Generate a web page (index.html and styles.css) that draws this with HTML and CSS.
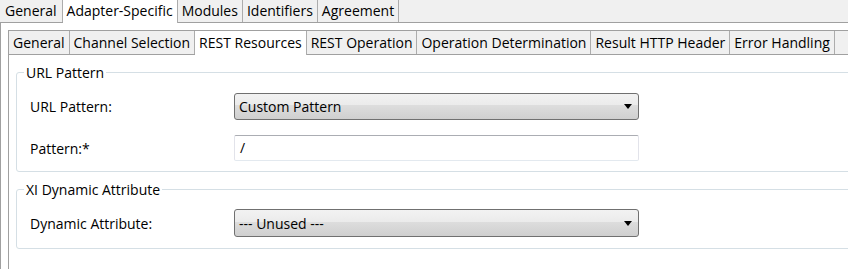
FILE: index.html
```
<!DOCTYPE html>
<html>
<head>
<meta charset="utf-8">
<link rel="stylesheet" href="styles.css">
</head>
<body>
<div class="page">
  <div class="tabbar top">
    <div class="tab first">General</div>
    <div class="tab sel">Adapter-Specific</div>
    <div class="tab">Modules</div>
    <div class="tab">Identifiers</div>
    <div class="tab">Agreement</div>
  </div>
  <div class="outer">
    <div class="inner">
      <div class="tabbar sub">
        <div class="tab">General</div>
        <div class="tab">Channel Selection</div>
        <div class="tab sel">REST Resources</div>
        <div class="tab">REST Operation</div>
        <div class="tab">Operation Determination</div>
        <div class="tab">Result HTTP Header</div>
        <div class="tab">Error Handling</div>
      </div>
      <div class="content">
        <fieldset class="group g1">
          <legend>URL Pattern</legend>
          <div class="rows">
            <div class="row">
              <div class="label">URL Pattern:</div>
              <div class="combo"><span class="val">Custom Pattern</span><svg class="arrow" width="8" height="5" viewBox="0 0 8 5"><polygon points="0,0 8,0 4,5" fill="#000"/></svg></div>
            </div>
            <div class="row">
              <div class="label">Pattern:*</div>
              <div class="field">/</div>
            </div>
          </div>
        </fieldset>
        <fieldset class="group g2">
          <legend>XI Dynamic Attribute</legend>
          <div class="rows">
            <div class="row">
              <div class="label">Dynamic Attribute:</div>
              <div class="combo tall"><span class="val">--- Unused ---</span><svg class="arrow" width="8" height="5" viewBox="0 0 8 5"><polygon points="0,0 8,0 4,5" fill="#000"/></svg></div>
            </div>
          </div>
        </fieldset>
      </div>
    </div>
  </div>
</div>
</body>
</html>
```
FILE: styles.css
```
html, body {
  margin: 0;
  padding: 0;
  background: #ffffff;
}
body {
  font-family: "Open Sans", "Noto Sans", sans-serif;
  font-size: 14px;
  color: #000;
}
.page {
  width: 848px;
  height: 269px;
  overflow: hidden;
}
.tabbar {
  display: flex;
  background: #f0f0f0;
}
.tabbar.top {
  height: 22px;
  border-bottom: 1px solid #a0a0a0;
}
.tab {
  height: 100%;
  padding: 0 4px;
  border-right: 1px solid #acacac;
  line-height: 22px;
  white-space: nowrap;
  box-sizing: border-box;
}
.tab.first {
  padding-left: 5px;
  padding-right: 5px;
}
.tab.sel {
  background: #ffffff;
  height: calc(100% + 1px);
}
.outer {
  border-left: 1px solid #a0a0a0;
  padding: 7px 0 0 7px;
  height: 246px;
}
.inner {
  border-left: 1px solid #a0a0a0;
  border-top: 1px solid #a0a0a0;
  height: 100%;
  margin-right: -20px;
}
.tabbar.sub {
  height: 23px;
  border-bottom: 1px solid #a0a0a0;
}
.tabbar.sub .tab {
  line-height: 23px;
}
.content {
  padding: 0 0 0 7px;
}
.group {
  margin: 8px 0 0 0;
  padding: 0;
  border: 1px solid #d5dfe5;
  border-radius: 3px;
  min-width: 0;
}
.group legend {
  margin-left: 7px;
  padding: 0 2px;
  line-height: 19px;
  height: 19px;
}
.rows {
  display: flex;
  flex-direction: column;
  gap: 15px;
  padding: 11px 0 10px 13px;
}
.g2 .rows {
  padding: 10px 0 11px 13px;
}
.row {
  display: flex;
  align-items: center;
}
.label {
  width: 204px;
  flex: none;
}
.combo {
  width: 405px;
  height: 27px;
  box-sizing: border-box;
  border: 1px solid #707070;
  border-radius: 3px;
  background: linear-gradient(#f2f2f2 0%, #ebebeb 45%, #dddddd 46%, #cfcfcf 100%);
  display: flex;
  align-items: center;
  justify-content: space-between;
  padding: 0 6px 0 4px;
}
.combo.tall {
  height: 28px;
}
.arrow {
  display: block;
}
.field {
  width: 405px;
  height: 26px;
  box-sizing: border-box;
  border: 1px solid #e2e3ea;
  border-top-color: #abadb3;
  border-bottom-color: #e3e9ef;
  border-radius: 2px;
  background: #fff;
  padding: 0 5px;
  line-height: 24px;
}
```
